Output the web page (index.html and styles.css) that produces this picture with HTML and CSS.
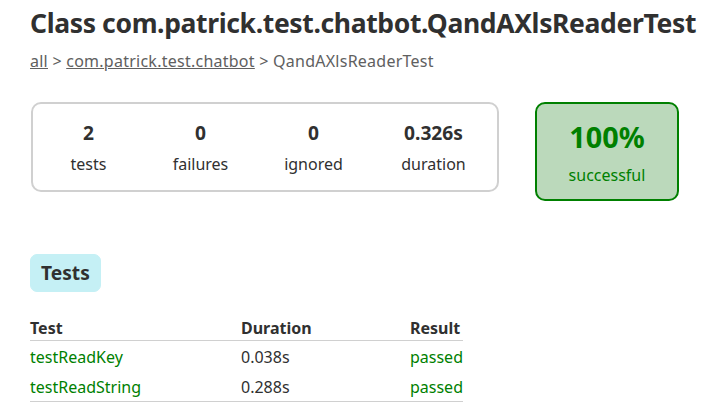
FILE: index.html
```html
<!DOCTYPE html>
<html>
<head>
<meta charset="utf-8">
<title>Test results - Class com.patrick.test.chatbot.QandAXlsReaderTest</title>
<link rel="stylesheet" href="styles.css">
</head>
<body>
<div class="content">
  <h1 class="title">Class com.patrick.test.chatbot.QandAXlsReaderTest</h1>
  <div class="breadcrumbs"><a href="#">all</a> &gt; <a href="#">com.patrick.test.chatbot</a> &gt; QandAXlsReaderTest</div>
  <div class="summary">
    <div class="summary-group">
      <div class="info-box"><div class="counter">2</div><p>tests</p></div>
      <div class="info-box"><div class="counter">0</div><p>failures</p></div>
      <div class="info-box"><div class="counter">0</div><p>ignored</p></div>
      <div class="info-box"><div class="counter">0.326s</div><p>duration</p></div>
    </div>
    <div class="success-rate">
      <div class="percent">100%</div>
      <p>successful</p>
    </div>
  </div>
  <ul class="tab-links">
    <li class="selected"><h2>Tests</h2></li>
  </ul>
  <table class="tests">
    <thead>
      <tr><th class="col-test">Test</th><th class="col-duration">Duration</th><th class="col-result">Result</th></tr>
    </thead>
    <tbody>
      <tr><td class="success">testReadKey</td><td>0.038s</td><td class="success">passed</td></tr>
      <tr><td class="success">testReadString</td><td>0.288s</td><td class="success">passed</td></tr>
    </tbody>
  </table>
</div>
</body>
</html>
```

FILE: styles.css
```css
html, body {
  margin: 0;
  padding: 0;
  background: #ffffff;
}

body {
  font-family: "Noto Sans", "Open Sans", sans-serif;
  font-size: 16px;
  color: #303030;
}

.content {
  padding: 5px 0 20px 30px;
}

.title {
  margin: 0;
  font-size: 26.5px;
  line-height: 36px;
  font-weight: bold;
  white-space: nowrap;
  letter-spacing: -0.36px;
}

.breadcrumbs {
  margin-top: 9px;
  line-height: 22px;
  color: #606060;
  letter-spacing: 0.25px;
}

.breadcrumbs a {
  color: #606060;
  text-decoration: underline;
}

.summary {
  margin-top: 30px;
  display: flex;
  align-items: flex-start;
}

.summary-group {
  margin-left: 1px;
  border: 2px solid #d0d0d0;
  border-radius: 10px;
  display: grid;
  grid-template-columns: 111px 113px 113px 127px;
  padding: 16px 0 15px;
}

.info-box {
  text-align: center;
}

.info-box p,
.success-rate p {
  margin: 0;
  line-height: 22px;
}

.counter {
  font-size: 19.2px;
  font-weight: bold;
  line-height: 26px;
  margin-bottom: 7px;
}

.success-rate {
  margin-left: 36px;
  width: 140px;
  border: 2px solid #008000;
  border-radius: 10px;
  background: #bbd9bb;
  color: #008000;
  text-align: center;
  padding: 14px 0 13px;
}

.percent {
  font-size: 28.8px;
  font-weight: bold;
  line-height: 38px;
  margin-bottom: 8px;
}

.tab-links {
  list-style: none;
  margin: 53px 0 0;
  padding: 0;
  display: flex;
}

.tab-links li {
  padding: 6px 10px 6px;
  border: 1px solid #c5f0f5;
  background: #c5f0f5;
  border-radius: 7px;
}

.tab-links h2 {
  margin: 0;
  font-size: 19.2px;
  line-height: 24px;
  font-weight: bold;
}

.tests {
  margin-top: 25px;
  border-collapse: collapse;
  border-bottom: 1px solid #d0d0d0;
  width: 433px;
}

.tests th {
  text-align: left;
  font-weight: bold;
  line-height: 22px;
  padding: 0 0 1px;
  border-bottom: 1px solid #d0d0d0;
  white-space: nowrap;
}

.col-test { width: 211px; }
.col-duration { width: 169px; }
.col-result { width: 53px; }

.tests td {
  padding: 6px 0 4px;
  line-height: 20px;
  white-space: nowrap;
}

.success {
  color: #008000;
}
```
